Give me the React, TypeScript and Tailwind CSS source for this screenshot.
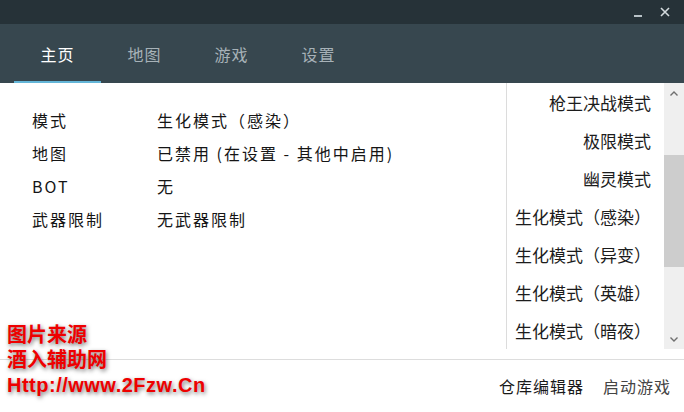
import * as React from "react";

const tabs = ["主页", "地图", "游戏", "设置"];

const info: [string, string][] = [
  ["模式", "生化模式（感染）"],
  ["地图", "已禁用 (在设置 - 其他中启用)"],
  ["BOT", "无"],
  ["武器限制", "无武器限制"],
];

const modes = [
  "枪王决战模式",
  "极限模式",
  "幽灵模式",
  "生化模式（感染）",
  "生化模式（异变）",
  "生化模式（英雄）",
  "生化模式（暗夜）",
];

const Chevron: React.FC<{ up?: boolean }> = ({ up }) => (
  <svg width="10" height="7" viewBox="0 0 10 7" className="text-[#6f6f6f]">
    <path
      d={up ? "M1.5 5.5 L5 2 L8.5 5.5" : "M1.5 1.5 L5 5 L8.5 1.5"}
      fill="none"
      stroke="currentColor"
      strokeWidth="1.4"
    />
  </svg>
);

const App: React.FC = () => {
  return (
    <div className="relative w-[684px] h-[412px] flex flex-col bg-white overflow-hidden font-['Noto_Sans_CJK_SC',sans-serif]">
      {/* title bar */}
      <div className="h-6 bg-[#263238] flex items-center justify-end pr-[14px] gap-[18px]">
        <div className="w-[8px] h-[2px] bg-[#b8c2c7] mt-[7px]" />
        <svg width="10" height="10" viewBox="0 0 10 10" className="text-[#d3dadd]">
          <path d="M1 1 L9 9 M9 1 L1 9" stroke="currentColor" strokeWidth="1.6" />
        </svg>
      </div>

      {/* tabs */}
      <div className="h-[59px] bg-[#37474f] flex pl-[14px]">
        {tabs.map((t, i) => (
          <div key={t} className="relative w-[87px] flex items-center justify-center">
            <span
              className={`text-[16px] tracking-[1px] ${
                i === 0 ? "text-white" : "text-[#a7b2b8]"
              }`}
            >
              {t}
            </span>
            {i === 0 && (
              <div className="absolute left-0 right-0 bottom-0 h-[2px] bg-[#64b6d8]" />
            )}
          </div>
        ))}
      </div>

      {/* body */}
      <div className="h-[276px] flex">
        <div className="flex-1 pt-[20px] pl-[32px] text-[#151515] text-[16px] tracking-[2px]">
          {info.map(([k, v]) => (
            <div key={k} className="h-[33px] flex items-center">
              <span className="w-[125px]">{k}</span>
              <span>{v}</span>
            </div>
          ))}
        </div>
        <div className="w-[178px] h-[266px] flex">
          <div className="flex-1 border-l border-[#dcdcdc] pt-[1px] pr-[13px] text-[17px] text-[#1c1c1c]">
            {modes.map((m) => (
              <div key={m} className="h-[38px] flex items-center justify-end">
                {m}
              </div>
            ))}
          </div>
          <div className="w-[20px] bg-[#efefef] flex flex-col">
            <div className="h-[20px] flex items-center justify-center">
              <Chevron up />
            </div>
            <div className="h-[52px]" />
            <div className="h-[112px] bg-[#cdcdcd]" />
            <div className="flex-1" />
            <div className="h-[20px] flex items-center justify-center">
              <Chevron />
            </div>
          </div>
        </div>
      </div>

      {/* footer */}
      <div className="flex-1 border-t border-[#dddddd] flex items-center justify-end pr-[13px] gap-[19px] text-[16px] tracking-[1px]">
        <span className="text-[#1a1a1a]">仓库编辑器</span>
        <span className="text-[#444]">启动游戏</span>
      </div>

      {/* watermark */}
      <div className="absolute left-[7px] top-[323px] flex flex-col text-[20px] leading-[25px] font-bold text-[#ee0000] font-['Liberation_Sans','Noto_Sans_CJK_SC',sans-serif] [text-shadow:1px_2px_4px_rgba(0,0,0,0.55)]">
        <span>图片来源</span>
        <span>酒入辅助网</span>
        <span className="tracking-[0.5px]">Http://www.2Fzw.Cn</span>
      </div>
    </div>
  );
};

export default App;
